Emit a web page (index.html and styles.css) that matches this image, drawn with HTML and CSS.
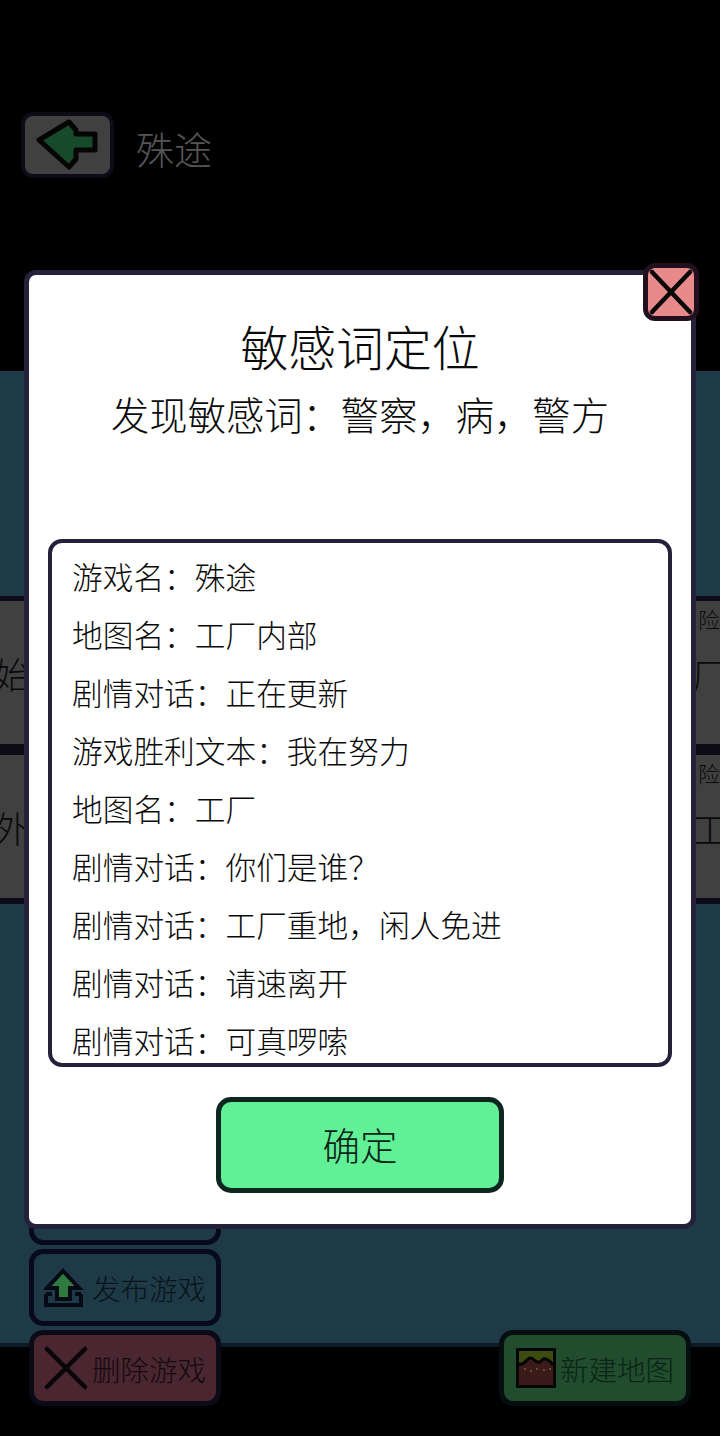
FILE: index.html
```html
<!DOCTYPE html>
<html lang="zh-CN">
<head>
<meta charset="utf-8">
<title>殊途</title>
<link rel="stylesheet" href="styles.css">
</head>
<body>
<div class="page">
  <header class="top">
    <button class="back">
      <svg width="64" height="52" viewBox="0 0 64 52"><path d="M3 21 L33 3 L40 11 L40 15 L59 15 L59 31 L40 31 L40 40 L33 48 Z" class="back-arrow"/></svg>
    </button>
    <span class="top-title">殊途</span>
  </header>
  <main class="stage">
    <div class="row">
      <div class="card card-left"><span class="card-main">始</span></div>
      <div class="card card-right"><span class="card-tag">险</span><span class="card-main">厂</span></div>
    </div>
    <div class="row">
      <div class="card card-left"><span class="card-main">外</span></div>
      <div class="card card-right"><span class="card-tag">险</span><span class="card-main">工</span></div>
    </div>
  </main>
  <footer class="bottom"></footer>

  <div class="tools">
    <div class="tools-col">
      <div class="tool tool-ghost"></div>
      <div class="tool tool-ghost">
        <svg width="40" height="40" viewBox="0 0 40 40"><path d="M19 3 L35 20 L26 20 L26 31 L13 31 L13 20 L3 20 Z" class="up-arrow"/><path d="M2 26 L2 37 L37 37 L37 26 M2 26 L8 26 M31 26 L37 26" class="up-tray"/></svg>
        <span class="tool-label">发布游戏</span>
      </div>
      <div class="tool tool-red">
        <svg width="44" height="44" viewBox="0 0 44 44"><path d="M3 3 L41 41 M41 3 L3 41" class="cross"/></svg>
        <span>删除游戏</span>
      </div>
    </div>
    <div class="tool tool-green">
      <svg width="40" height="40" viewBox="0 0 40 40"><rect x="1.5" y="1.5" width="37" height="37" fill="#3a1b1a" stroke="#050505" stroke-width="3"/><path d="M3 3 H37 V17 Q32 10 27 11 Q23 17 18 12 Q15 8 11 12 Q7 17 3 15 Z" fill="#3c4c10"/><path d="M3 16 Q7 17 11 12 Q15 8 18 12 Q23 17 27 11 Q32 10 37 17" fill="none" stroke="#050505" stroke-width="3"/><path d="M8 21 h2 M14 23 h2 M20 21 h2 M27 22 h2 M33 21 h2" stroke="#7a5a4a" stroke-width="1.5"/></svg>
      <span>新建地图</span>
    </div>
  </div>

  <section class="modal">
    <button class="close">
      <svg width="46" height="48" viewBox="0 0 46 48"><path d="M4 4 L42 44 M42 4 L4 44" class="close-x"/></svg>
    </button>
    <h1 class="modal-title">敏感词定位</h1>
    <p class="modal-sub">发现敏感词&#xFF1A;警察&#xFF0C;病&#xFF0C;警方</p>
    <div class="list">
      <p>游戏名&#xFF1A;殊途</p>
      <p>地图名&#xFF1A;工厂内部</p>
      <p>剧情对话&#xFF1A;正在更新</p>
      <p>游戏胜利文本&#xFF1A;我在努力</p>
      <p>地图名&#xFF1A;工厂</p>
      <p>剧情对话&#xFF1A;你们是谁&#xFF1F;</p>
      <p>剧情对话&#xFF1A;工厂重地&#xFF0C;闲人免进</p>
      <p>剧情对话&#xFF1A;请速离开</p>
      <p>剧情对话&#xFF1A;可真啰嗦</p>
    </div>
    <button class="ok"><span class="ok-label">确定</span></button>
  </section>
</div>
</body>
</html>
```
FILE: styles.css
```css
* { box-sizing: border-box; }
html, body { margin: 0; padding: 0; background: #000; }
body { font-family: "Noto Sans CJK SC", "Noto Sans", sans-serif; font-weight: 300; }
button { font-family: inherit; font-weight: inherit; padding: 0; }

.page {
  position: relative;
  width: 720px;
  height: 1436px;
  overflow: hidden;
  display: flex;
  flex-direction: column;
  background: #000;
}

.top {
  height: 371px;
  flex: none;
  display: flex;
  align-items: flex-start;
  padding: 112px 0 0 21px;
  gap: 22px;
}
.back {
  width: 93px;
  height: 66px;
  border: 4px solid #0c0b16;
  border-radius: 12px;
  background: #404040;
  display: flex;
  align-items: center;
  justify-content: center;
}
.back-arrow { fill: #174a2a; stroke: #050505; stroke-width: 5; stroke-linejoin: round; }
.top-title { font-size: 38px; line-height: 72px; color: #555; }

.stage {
  flex: 1;
  background: #1f3a47;
  border-bottom: 4px solid #0e1a28;
  padding-top: 225px;
  display: flex;
  flex-direction: column;
}
.row { display: flex; justify-content: space-between; }
.card {
  width: 120px;
  height: 154px;
  background: #404040;
  border-top: 5px solid #0d0b18;
  border-bottom: 6px solid #0d0b18;
  color: #0a0a0a;
  display: flex;
  flex-direction: column;
}
.card-left { margin-left: -90px; align-items: flex-end; justify-content: center; }
.card-right { margin-right: -90px; }
.card-main { font-size: 36px; line-height: 50px; }
.card-tag { font-size: 22px; line-height: 30px; margin: 2px 0 16px 8px; }
.card-right .card-main { margin-left: 2px; }

.bottom { height: 89px; flex: none; }

.tools {
  position: absolute;
  left: 29px;
  right: 29px;
  bottom: 30px;
  display: flex;
  justify-content: space-between;
  align-items: flex-end;
}
.tools-col { display: flex; flex-direction: column; gap: 4px; }
.tool {
  width: 192px;
  height: 77px;
  border: 5px solid #060a1a;
  border-radius: 14px;
  display: flex;
  align-items: center;
  justify-content: center;
  gap: 4px;
  font-size: 28.5px;
  color: #07141a;
  white-space: nowrap;
}
.tool-label { margin-left: 4px; }
.tool-ghost { background: #1f3a47; }
.tool-red { background: #4a2630; border-color: #0c0a16; color: #140a10; height: 76px; }
.tool-green { background: #214c2e; border-color: #050f10; color: #0a2415; height: 76px; }
.up-arrow { fill: #2f7a3e; stroke: #050a14; stroke-width: 4; stroke-linejoin: miter; }
.up-tray { fill: none; stroke: #050a14; stroke-width: 4; }
.cross { stroke: #0a0608; stroke-width: 4.5; stroke-linecap: round; fill: none; }

.modal {
  position: absolute;
  left: 24px;
  top: 270px;
  width: 672px;
  height: 959px;
  background: #fff;
  border: 5px solid #24213a;
  border-radius: 12px;
  display: flex;
  flex-direction: column;
  align-items: center;
  color: #0a0a0a;
}
.close {
  position: absolute;
  top: -12px;
  right: -8px;
  width: 56px;
  height: 58px;
  background: #e88a8a;
  border: 5px solid #22101e;
  border-radius: 12px;
  display: flex;
  align-items: center;
  justify-content: center;
}
.close-x { stroke: #050505; stroke-width: 4.5; stroke-linecap: round; fill: none; }
.modal-title {
  margin: 41px 0 0;
  font-size: 47.8px;
  font-weight: 300;
  line-height: 60px;
}
.modal-sub {
  margin: 13px 0 0;
  font-size: 38.3px;
  line-height: 50px;
  white-space: nowrap;
}
.list {
  margin-top: 100px;
  width: 624px;
  height: 528px;
  flex: none;
  border: 4px solid #24213a;
  border-radius: 14px;
  padding: 4px 20px 0;
  overflow: hidden;
}
.list p {
  margin: 0;
  font-size: 30.7px;
  line-height: 58px;
  white-space: nowrap;
}
.ok {
  margin-top: 30px;
  width: 288px;
  height: 96px;
  flex: none;
  background: #62f097;
  border: 5px solid #0e2620;
  border-radius: 15px;
  font-size: 37.5px;
  color: #0a2418;
}
.ok-label { display: block; margin-top: -4px; }
```
